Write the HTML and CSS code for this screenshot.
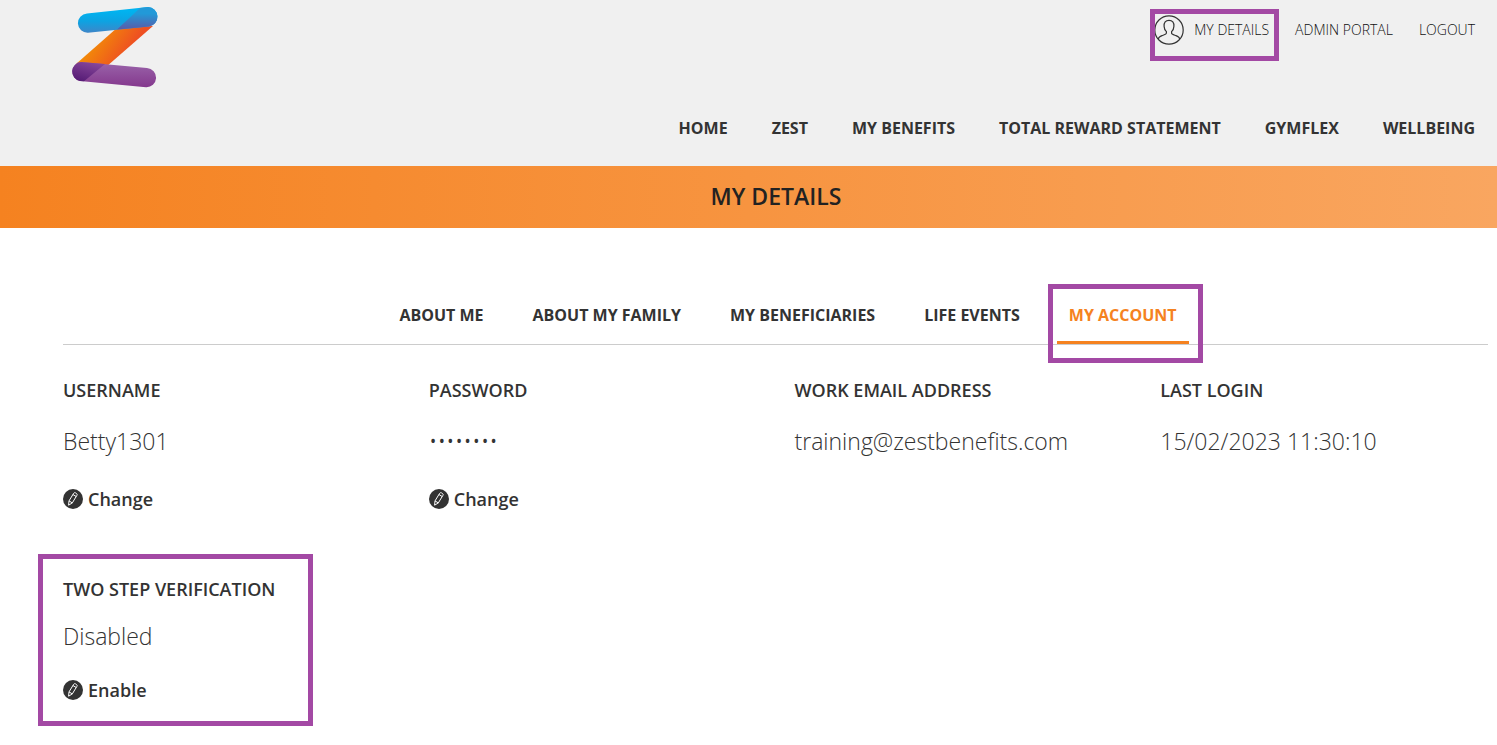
FILE: index.html
```html
<!DOCTYPE html>
<html lang="en">
<head>
    <meta charset="UTF-8">
    <meta name="viewport" content="width=device-width, initial-scale=1.0">
    <title>My Details</title>
    <link rel="stylesheet" href="styles.css">
</head>
<body>

<!-- shared icons -->
<svg class="icon-defs" width="0" height="0" aria-hidden="true">
    <symbol id="pencil" viewBox="0 0 20 20">
        <circle cx="10" cy="10" r="10" fill="#333"/>
        <g fill="none" stroke="#fff" stroke-width="1" stroke-linejoin="round">
            <path d="M5.6 16.2 L6 11.9 L10.6 4.4 Q11.3 3.2 12.6 3.9 L13.5 4.5 Q14.6 5.2 13.9 6.4 L9.3 13.9 Z"/>
            <path d="M6 11.9 L9.3 13.9 M9.9 5.5 L13.2 7.5"/>
        </g>
    </symbol>
</svg>

<header class="header">
    <a href="#" class="logo" aria-label="Zest">
        <svg width="90" height="82" viewBox="0 0 90 82">
            <defs>
                <linearGradient id="blue" x1="0" y1="0" x2="0" y2="1">
                    <stop offset="0.15" stop-color="#00b3f0"/>
                    <stop offset="0.55" stop-color="#0da3e2"/>
                    <stop offset="1" stop-color="#3e86c8"/>
                </linearGradient>
                <linearGradient id="blueFold" x1="0" y1="0" x2="0" y2="1">
                    <stop offset="0.3" stop-color="#2299d8"/>
                    <stop offset="1" stop-color="#5a5aa8"/>
                </linearGradient>
                <linearGradient id="orange" gradientUnits="userSpaceOnUse" x1="27" y1="38" x2="55" y2="58">
                    <stop offset="0" stop-color="#f28a08"/>
                    <stop offset="1" stop-color="#ee4f22"/>
                </linearGradient>
                <linearGradient id="purple" x1="0" y1="0" x2="0" y2="1">
                    <stop offset="0" stop-color="#9a64aa"/>
                    <stop offset="1" stop-color="#84388d"/>
                </linearGradient>
                <linearGradient id="purpleFold" gradientUnits="userSpaceOnUse" x1="22" y1="59" x2="16" y2="80">
                    <stop offset="0" stop-color="#87479a"/>
                    <stop offset="1" stop-color="#561c76"/>
                </linearGradient>
            </defs>
            <path d="M50 25 L85 24 L38 65 L8 62 Z" fill="url(#orange)"/>
            <path d="M19 11.5 L80 5 A9.8 9.8 0 0 1 81 24.5 L20 30.7 A9.6 9.6 0 0 1 19 11.5 Z" fill="url(#blue)"/>
            <path d="M72 6 L80 5 A9.8 9.8 0 0 1 81 24.5 L49 27.5 Z" fill="url(#blueFold)"/>
            <path d="M13 60 L79 66 A9.6 9.6 0 0 1 78 85.2 L12 79 A9.6 9.6 0 0 1 13 60 Z" fill="url(#purple)"/>
            <path d="M13 60 L37 62 L16 79.2 L12 79 A9.6 9.6 0 0 1 13 60 Z" fill="url(#purpleFold)"/>
        </svg>
    </a>
    <div class="header-right">
        <ul class="user-links">
            <li class="highlight highlight-user">
                <a href="#">
                    <svg class="user-icon" width="30" height="30" viewBox="0 0 30 30" fill="none" stroke="#333" stroke-width="1.2" aria-hidden="true">
                        <circle cx="15" cy="15" r="14.2"/>
                        <path d="M4.2 24.2 C4.6 21.9 6 21.3 8 20.6 C10.6 19.7 12.4 19.3 12.4 18.2 L12.4 16.6 C10.8 15.3 10.2 13.5 10.1 11.4 C9.8 7.6 11.6 5.3 15 5.3 C18.4 5.3 20.2 7.6 19.9 11.4 C19.8 13.5 19.2 15.3 17.6 16.6 L17.6 18.2 C17.6 19.3 19.4 19.7 22 20.6 C24 21.3 25.4 21.9 25.8 24.2"/>
                    </svg>
                    My Details
                </a>
            </li>
            <li><a href="#">Admin Portal</a></li>
            <li><a href="#">Logout</a></li>
        </ul>
        <nav>
            <ul class="main-nav">
                <li><a href="#">Home</a></li>
                <li><a href="#">Zest</a></li>
                <li><a href="#">My Benefits</a></li>
                <li><a href="#">Total Reward Statement</a></li>
                <li><a href="#">GymFlex</a></li>
                <li><a href="#">Wellbeing</a></li>
            </ul>
        </nav>
    </div>
</header>

<div class="banner">
    <h1>My Details</h1>
</div>

<main class="content">
    <ul class="tabs">
        <li><a href="#">About Me</a></li>
        <li><a href="#">About My Family</a></li>
        <li><a href="#">My Beneficiaries</a></li>
        <li><a href="#">Life Events</a></li>
        <li class="highlight highlight-tab"><a href="#" class="active">My Account</a></li>
    </ul>

    <div class="details">
        <section>
            <h2>Username</h2>
            <p>Betty1301</p>
            <a href="#" class="edit"><svg width="20" height="20" aria-hidden="true"><use href="#pencil"/></svg>Change</a>
        </section>
        <section>
            <h2>Password</h2>
            <p>••••••••</p>
            <a href="#" class="edit"><svg width="20" height="20" aria-hidden="true"><use href="#pencil"/></svg>Change</a>
        </section>
        <section>
            <h2>Work Email Address</h2>
            <p>training@zestbenefits.com</p>
        </section>
        <section>
            <h2>Last Login</h2>
            <p>15/02/2023 11:30:10</p>
        </section>
        <section class="two-step highlight highlight-step">
            <h2>Two Step Verification</h2>
            <p>Disabled</p>
            <a href="#" class="edit"><svg width="20" height="20" aria-hidden="true"><use href="#pencil"/></svg>Enable</a>
        </section>
    </div>
</main>

</body>
</html>
```
FILE: styles.css
```css
* {
    box-sizing: border-box;
}

body {
    margin: 0;
    font-family: "Open Sans", sans-serif;
    color: #333;
    background-color: #fff;
}

h1, h2, p, ul {
    margin: 0;
    padding: 0;
}

ul {
    list-style: none;
}

a {
    color: inherit;
    text-decoration: none;
}

svg {
    display: block;
}

.icon-defs {
    position: absolute;
}

/* header */
.header {
    display: flex;
    justify-content: space-between;
    padding: 2px 22px 26px 68px;
    background-color: #f0f0f0;
}

.logo svg {
    overflow: visible;
}

.header-right {
    display: flex;
    flex-direction: column;
    align-items: flex-end;
    gap: 71px;
    padding-top: 13px;
}

.user-links {
    display: flex;
    align-items: center;
    gap: 26px;
    font-size: 14px;
    line-height: 30px;
    font-weight: 300;
    color: #111;
    text-transform: uppercase;
}

.user-links a {
    display: flex;
    gap: 10px;
}

.main-nav {
    display: flex;
    gap: 44px;
    font-size: 16px;
    line-height: 24px;
    font-weight: 700;
    text-transform: uppercase;
}

/* orange title bar */
.banner {
    padding: 13px 8px 15px 63px;
    background: linear-gradient(to right, #f58220, #f9a660);
    text-align: center;
}

.banner h1 {
    font-size: 23px;
    line-height: 34px;
    font-weight: 600;
    color: #222;
    text-transform: uppercase;
}

/* page content */
.content {
    padding: 72px 9px 24px 63px;
}

.tabs {
    display: flex;
    justify-content: center;
    border-bottom: 1px solid #ccc;
    font-size: 16px;
    line-height: 30px;
    font-weight: 700;
    text-transform: uppercase;
}

.tabs li {
    margin-left: 25px;
}

.tabs a {
    display: block;
    padding: 0 12px 11px;
    border-bottom: 3px solid transparent;
}

.tabs .active {
    color: #f58220;
    border-bottom-color: #f58220;
}

.details {
    display: grid;
    grid-template-columns: repeat(4, 1fr);
    column-gap: 38px;
    row-gap: 63px;
    padding-top: 33px;
}

.details h2 {
    font-size: 18px;
    line-height: 24px;
    font-weight: 600;
    text-transform: uppercase;
}

.details p {
    margin: 22px 0 29px;
    font-size: 23px;
    line-height: 34px;
    font-weight: 300;
}

.details .two-step p {
    margin: 18px 0 25px;
}

.edit {
    display: inline-flex;
    align-items: center;
    gap: 5px;
    font-size: 18px;
    line-height: 24px;
    font-weight: 600;
}

/* purple callout frames */
.highlight {
    position: relative;
}

.highlight::after {
    content: "";
    position: absolute;
    border: 5px solid #a349a4;
    pointer-events: none;
}

.highlight-user::after {
    inset: -6px -10px -16px -4px;
}

.highlight-tab::after {
    inset: -16px -14px -19px -9px;
}

.highlight-step::after {
    inset: -23px auto -21px -25px;
    width: 265px;
}
```
